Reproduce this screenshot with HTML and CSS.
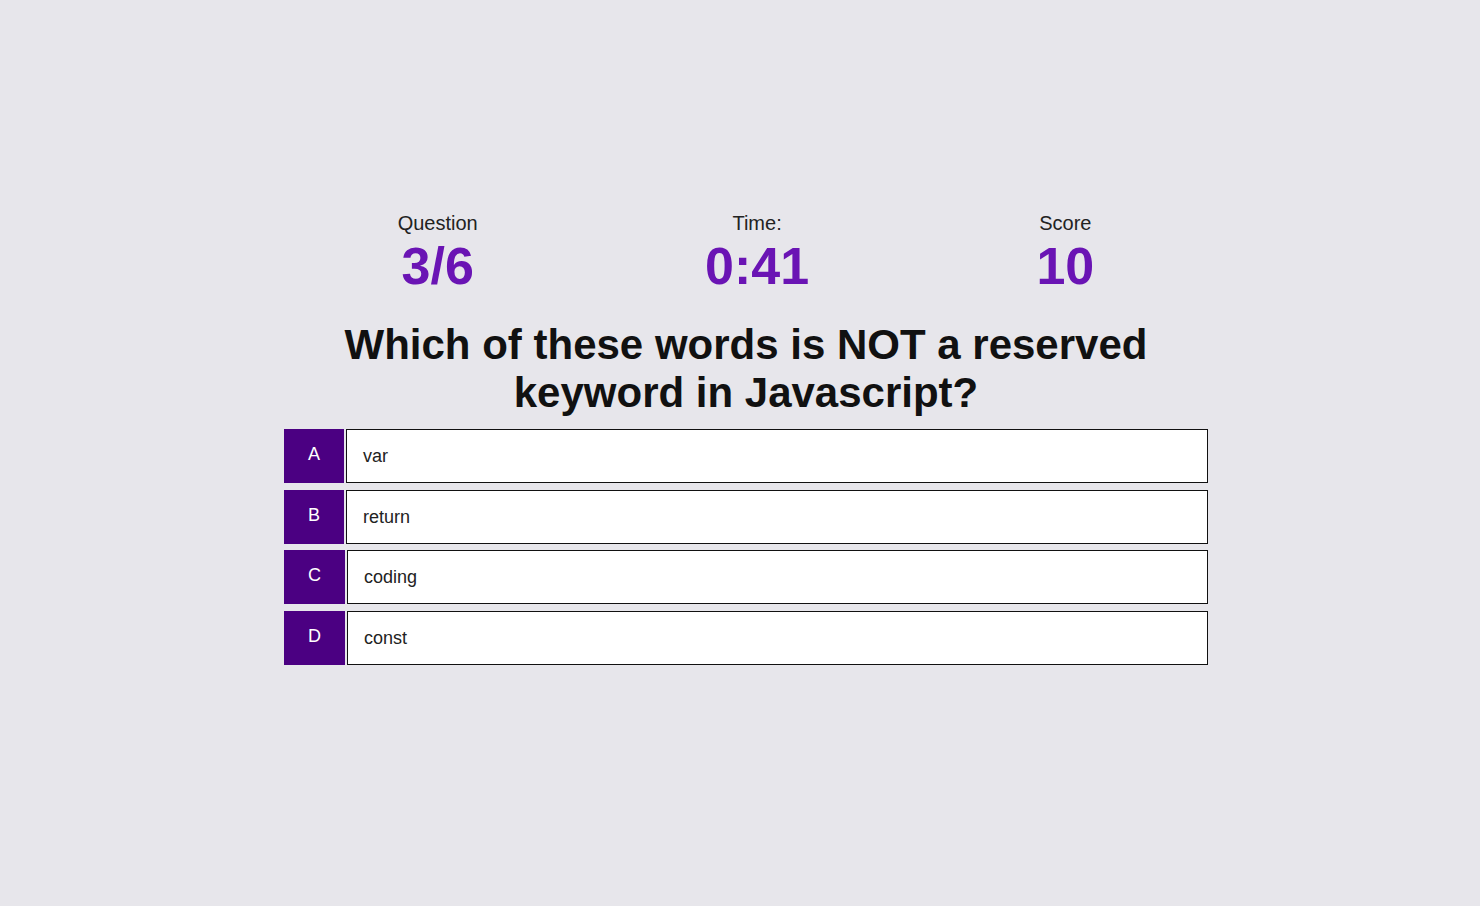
FILE: index.html
```html
<!DOCTYPE html>
<html lang="en">
<head>
<meta charset="utf-8">
<title>Quiz</title>
<link rel="stylesheet" href="styles.css">
</head>
<body>
<main class="page">
  <div class="game">
    <div class="hud">
      <div class="hud-item">
        <p class="hud-label">Question</p>
        <p class="hud-value">3/6</p>
      </div>
      <div class="hud-item">
        <p class="hud-label">Time:</p>
        <p class="hud-value">0:41</p>
      </div>
      <div class="hud-item">
        <p class="hud-label">Score</p>
        <p class="hud-value">10</p>
      </div>
    </div>
    <h2 class="question">Which of these words is NOT a reserved keyword in Javascript?</h2>
    <div class="choices">
      <div class="choice"><p class="choice-prefix">A</p><p class="choice-text">var</p></div>
      <div class="choice"><p class="choice-prefix">B</p><p class="choice-text">return</p></div>
      <div class="choice"><p class="choice-prefix">C</p><p class="choice-text">coding</p></div>
      <div class="choice"><p class="choice-prefix">D</p><p class="choice-text">const</p></div>
    </div>
  </div>
</main>
</body>
</html>
```

FILE: styles.css
```css
* { box-sizing: border-box; }
html, body { margin: 0; padding: 0; }
body {
  background: #e7e6eb;
  font-family: "Liberation Sans", Arial, sans-serif;
  color: #111;
}
.page {
  display: flex;
  justify-content: center;
  padding: 212px 0 0 12px;
}
.game {
  width: 924px;
}
.hud {
  display: flex;
  justify-content: space-around;
}
.hud-item {
  text-align: center;
}
.hud-label {
  margin: 0;
  font-size: 20px;
  color: #222;
}
.hud-value {
  margin: 1px 0 0;
  font-size: 52px;
  font-weight: bold;
  color: #6a14b4;
}
.question {
  margin: 25px 0 12px;
  font-size: 42px;
  line-height: 48px;
  text-align: center;
  font-weight: bold;
  color: #111;
}
.choices {
  display: flex;
  flex-direction: column;
  gap: 6.67px;
}
.choice {
  display: flex;
  gap: 2px;
}
.choice-prefix {
  margin: 0;
  padding: 15px 24px 0;
  background: #4b0082;
  color: #fff;
  font-size: 18px;
  line-height: 20px;
}
.choice-text {
  margin: 0;
  flex: 1;
  padding: 16px;
  background: #fff;
  border: 1px solid #111;
  font-size: 18px;
  line-height: 20px;
  color: #222;
}
```
